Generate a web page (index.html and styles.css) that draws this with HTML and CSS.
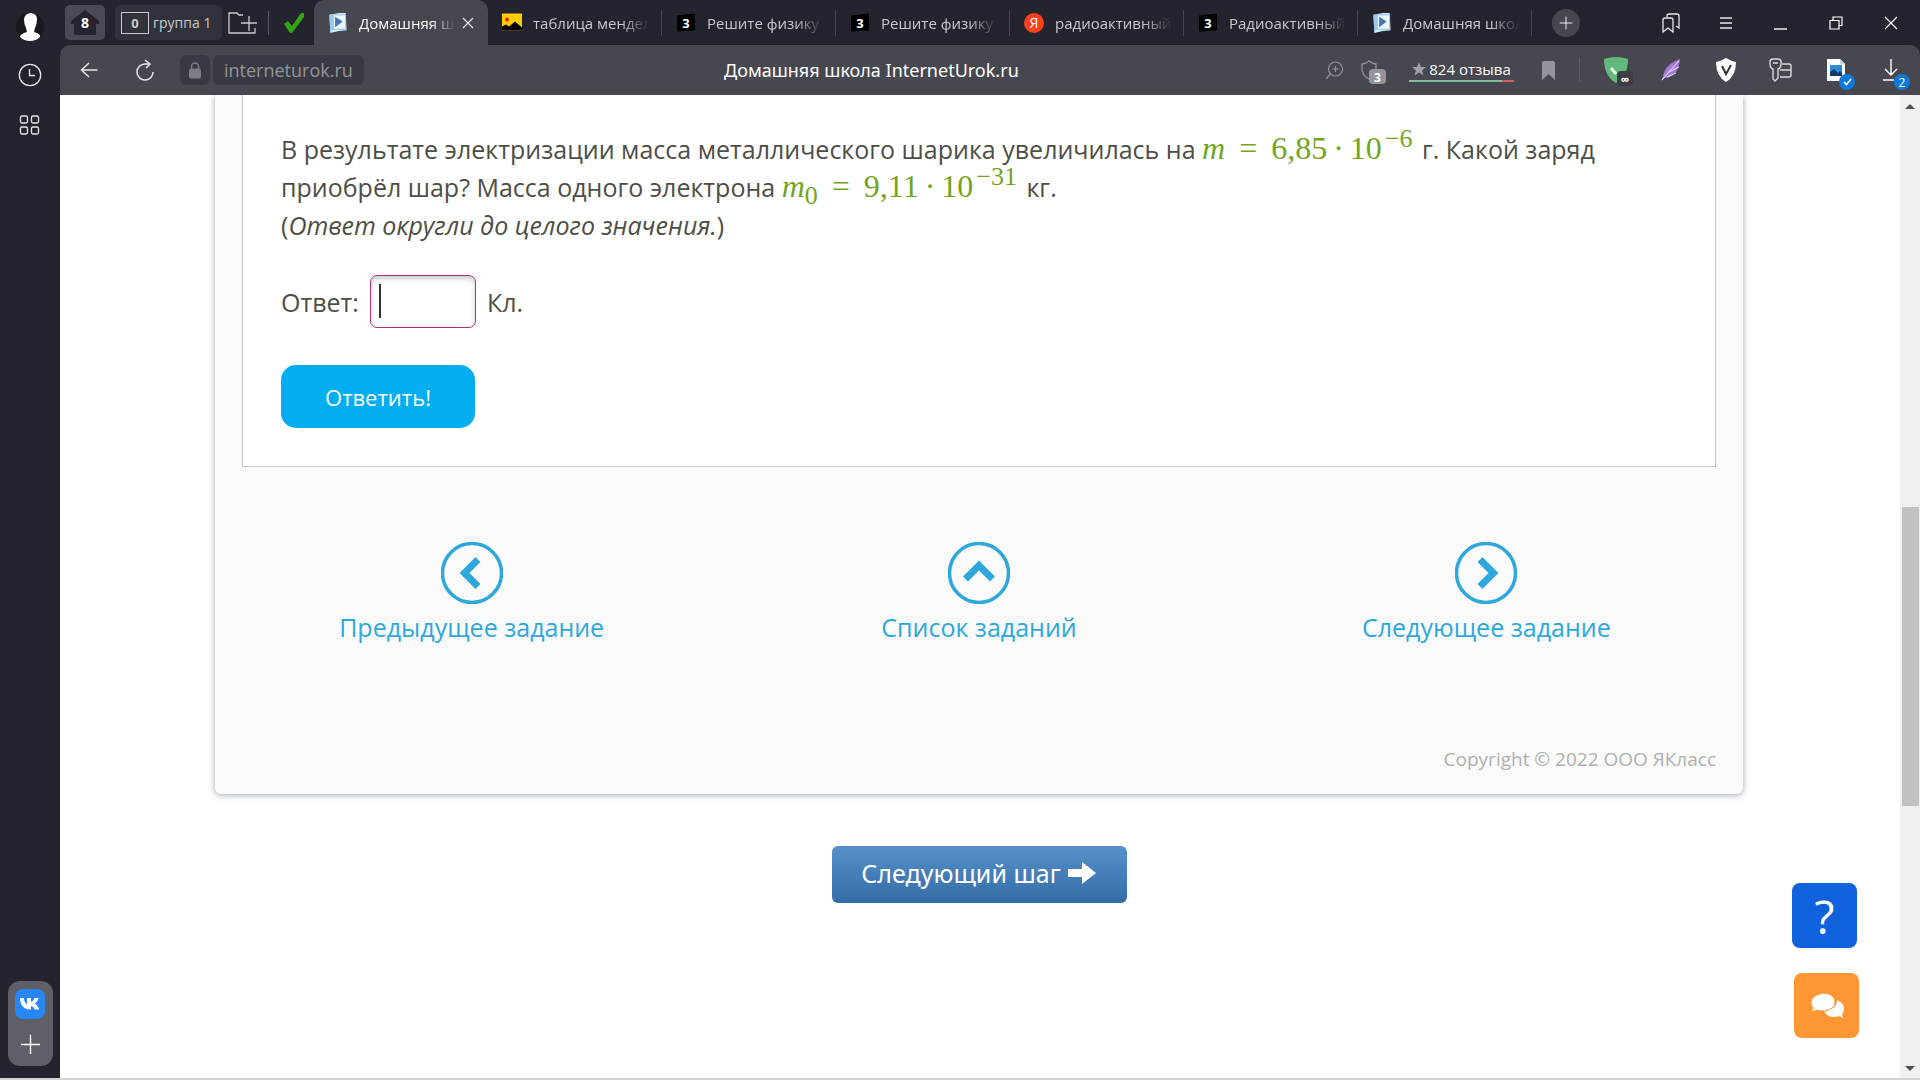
FILE: index.html
```html
<!DOCTYPE html>
<html lang="ru">
<head>
<meta charset="utf-8">
<title>Домашняя школа InternetUrok.ru</title>
<link rel="stylesheet" href="styles.css">
</head>
<body>
<svg width="0" height="0" class="sprite" aria-hidden="true">
  <symbol id="ico-video" viewBox="0 0 20 22">
    <path d="M1 3l10-2 7 0 1 18-8 1-9 2z" fill="#d5ebfa"/>
    <path d="M1 3h4v15l-3 3z" fill="#9cc8ee"/>
    <path d="M5 3h13v15H5z" fill="#eef8ff" stroke="#8fc0ea"/>
    <path d="M7 5l8 5-8 6z" fill="#3f78b5"/>
  </symbol>
  <symbol id="ico-znania" viewBox="0 0 20 20">
    <path d="M1 3l18-2v17l-18 1z" fill="#000"/>
  </symbol>
  <symbol id="ico-plus" viewBox="0 0 20 20">
    <path d="M10 1v18M1 10h18" fill="none" stroke="currentColor" stroke-width="1.3"/>
  </symbol>
</svg>

<div class="browser">
  <aside class="rail">
    <button class="rail-btn avatar" aria-label="Профиль">
      <svg width="30" height="32" viewBox="0 0 30 32"><circle cx="15" cy="16" r="14" fill="#17171c"/><path d="M9 8q1-6 7-6 6 1 6 6 0 5-2 9l-1 4q7 2 6 5-4 4-10 4T5 26q0-3 7-5l-1-4q-2-4-2-9z" fill="#fff"/></svg>
    </button>
    <button class="rail-btn clock" aria-label="История">
      <svg width="24" height="24" viewBox="0 0 24 24" fill="none" stroke="#e8e8ea" stroke-width="1.3"><circle cx="12" cy="12" r="10.7"/><path d="M11.500 6v6.500H17"/></svg>
    </button>
    <button class="rail-btn" aria-label="Табло">
      <svg width="22" height="22" viewBox="0 0 22 22" fill="none" stroke="#e8e8ea" stroke-width="1.3"><rect x="1.500" y="2" width="7" height="7" rx="1.500"/><rect x="12.500" y="2" width="7" height="7" rx="1.500"/><rect x="1.500" y="13" width="7" height="7" rx="1.500"/><rect x="12.500" y="13" width="7" height="7" rx="1.500"/></svg>
    </button>
    <div class="dock">
      <button class="vk" aria-label="ВКонтакте">
        <svg width="20" height="14" viewBox="0 0 20 14"><path d="M0 1h4c0 4 2 6 3 6.500V1h4v4c1-.2 3-2 3.500-4h4.200c-.6 2.500-2.700 4.700-4 5.500 1.300.7 3.800 3 4.500 6h-4.500c-.6-2-2-3.200-3.700-3.500v3.500h-1C4 12.500.2 8.500 0 1z" fill="#fff"/></svg>
      </button>
      <button class="dock-add" aria-label="Добавить"><svg width="21" height="21"><use href="#ico-plus"/></svg></button>
    </div>
  </aside>

  <header class="tabstrip">
    <button class="home" aria-label="Закладки">
      <svg width="30" height="26" viewBox="0 0 30 26"><path d="M15 0l14 11v3h-3v11H4V14H1v-3z" fill="#23242d"/></svg>
      <span class="home-count">8</span>
    </button>
    <button class="group">
      <span class="folder">0</span><span>группа 1</span>
    </button>
    <button class="folder-add" aria-label="Новая группа">
      <svg width="30" height="22" viewBox="0 0 30 22" fill="none" stroke="#c9cacf" stroke-width="1.3"><path d="M15 3h-4L9 1H1v20h26v-5"/><path d="M21 4v15M13 11h16"/></svg>
    </button>
    <span class="bar"></span>
    <button class="pinned" aria-label="Закреплённая вкладка">
      <svg width="22" height="22" viewBox="0 0 22 22"><path d="M1 12l4-3 4 5L18 1h3v4L9 21H7z" fill="#32a60e"/></svg>
    </button>
    <nav class="tabs">
      <a class="tab active" href="#"><svg class="fav"><use href="#ico-video"/></svg><span class="label">Домашняя школа</span><svg class="close" width="12" height="12" viewBox="0 0 12 12"><path d="M1 1l10 10M11 1L1 11" stroke="#e8e8ea" stroke-width="1.2"/></svg></a>
      <a class="tab" href="#"><svg class="fav" viewBox="0 0 20 20"><path d="M0 1h20v17H0z" fill="#fc0"/><path d="M0 18v-4l4-2 3 2 6-5 7 6v3z" fill="#000"/><circle cx="5" cy="7" r="2" fill="#e02020"/></svg><span class="label">таблица менделеева</span></a>
      <a class="tab" href="#"><span class="fav zn"><svg class="fav"><use href="#ico-znania"/></svg><b>3</b></span><span class="label">Решите физику</span></a>
      <a class="tab" href="#"><span class="fav zn"><svg class="fav"><use href="#ico-znania"/></svg><b>3</b></span><span class="label">Решите физику</span></a>
      <a class="tab" href="#"><span class="fav ya">Я</span><span class="label">радиоактивный</span></a>
      <a class="tab" href="#"><span class="fav zn"><svg class="fav"><use href="#ico-znania"/></svg><b>3</b></span><span class="label">Радиоактивный</span></a>
      <a class="tab" href="#"><svg class="fav"><use href="#ico-video"/></svg><span class="label">Домашняя школа</span></a>
    </nav>
    <button class="new-tab" aria-label="Новая вкладка"><svg width="14" height="14"><use href="#ico-plus"/></svg></button>
    <div class="cells">
      <button aria-label="Коллекции"><svg width="18" height="20" viewBox="0 0 18 20" fill="none" stroke="#e8e8ea" stroke-width="1.3"><path d="M5 4V3q0-2 2-2h8q2 0 2 2v12l-3-2"/><path d="M1 19V7q0-2 2-2h6q2 0 2 2v12l-5-4z"/></svg></button>
      <button aria-label="Меню"><svg width="14" height="14" viewBox="0 0 14 14"><path d="M1 2h12M1 7h12M1 12h12" stroke="#e8e8ea" stroke-width="1.3"/></svg></button>
      <button aria-label="Свернуть"><svg width="14" height="14" viewBox="0 0 14 14"><path d="M0 13h13" stroke="#fff" stroke-width="1.4"/></svg></button>
      <button aria-label="Окно"><svg width="14" height="14" viewBox="0 0 14 14" fill="none" stroke="#fff" stroke-width="1.2"><path d="M1 4.500h9V13H1zM4 4V1h9v8.500h-3"/></svg></button>
      <button aria-label="Закрыть"><svg width="14" height="14" viewBox="0 0 14 14"><path d="M1 1l12 12M13 1L1 13" stroke="#fff" stroke-width="1.2"/></svg></button>
    </div>
  </header>

  <div class="toolbar">
    <button class="back" aria-label="Назад"><svg width="18" height="16" viewBox="0 0 18 16" fill="none" stroke="#e8e8ea" stroke-width="1.4"><path d="M17.500 8H1.500M9 1L1.500 8 9 15"/></svg></button>
    <button class="reload" aria-label="Обновить"><svg width="20" height="22" viewBox="0 0 20 22" fill="none" stroke="#e8e8ea" stroke-width="1.5"><path d="M14.500 5H10a8 8 0 1 0 8 8"/><path d="M10 1l5 4-4 4"/></svg></button>
    <button class="lock" aria-label="Защита"><svg width="14" height="17" viewBox="0 0 14 17"><path d="M3.500 7V4.500a3.500 3.500 0 0 1 7 0V7" fill="none" stroke="#7d7e86" stroke-width="1.500"/><rect x="1" y="6.500" width="12" height="10" rx="2" fill="#7d7e86"/></svg></button>
    <a class="host" href="#">interneturok.ru</a>
    <h1 class="page-title">Домашняя школа InternetUrok.ru</h1>
    <button class="zoom" aria-label="Масштаб"><svg width="19" height="19" viewBox="0 0 19 19" fill="none" stroke="#94959c" stroke-width="1.2"><circle cx="10.500" cy="8" r="7"/><path d="M5.500 13L1 18M7.500 8h6M10.500 5v6"/></svg></button>
    <button class="protect" aria-label="Защита сайта"><svg width="18" height="20" viewBox="0 0 18 20" fill="none" stroke="#94959c" stroke-width="1.3"><path d="M9 1q3 2.500 7 3v6q-1 6-7 9-6-3-7-9V4q4-.5 7-3z"/></svg><span class="badge grey">3</span></button>
    <a class="rating" href="#"><span class="reviews"><svg width="14" height="14" viewBox="0 0 14 14"><path d="M7 0l2 5h5l-4 3.400 1.500 5.100L7 10.500l-4.500 3L4 8.400 0 5h5z" fill="#a0a1a8"/></svg>824 отзыва</span></a>
    <button class="mark" aria-label="Закладка"><svg width="13" height="19" viewBox="0 0 13 19"><path d="M0 2q0-2 2-2h9q2 0 2 2v17l-6.500-6L0 19z" fill="#94959c"/></svg></button>
    <span class="bar short"></span>
    <div class="cells">
      <button aria-label="Adguard"><svg width="26" height="26" viewBox="0 0 26 26"><path d="M1 2q12-4 24 0 0 17-12 24Q1 19 1 2z" fill="#62b97b"/><path d="M8 11l5 6" fill="none" stroke="#e9f5ec" stroke-width="3"/></svg><span class="badge dark">∞</span></button>
      <button aria-label="Перо"><svg width="22" height="24" viewBox="0 0 22 24"><path d="M20 1Q4 7 3 19l-2 4 4-3Q18 19 20 1z" fill="#a67ad8"/><path d="M2 22Q10 12 19 3M7 19l9-4M9 14l10-5" stroke="#efe0ff" fill="none"/></svg></button>
      <button aria-label="Щит"><svg width="22" height="24" viewBox="0 0 22 24"><path d="M11 0q5 3 10 4 0 14-10 20Q1 18 1 4 6 3 11 0z" fill="#fff"/><path d="M7 8l4 8 5-9" fill="none" stroke="#33343d" stroke-width="2"/></svg></button>
      <button aria-label="Пароли"><svg width="24" height="24" viewBox="0 0 24 24" fill="none" stroke="#d8d8dc" stroke-width="1.400"><path d="M12 6q0 4-3 5v9l-3 3-2-2V11q-3-1-3-5V4q0-3 3-3h5q3 0 3 3z"/><path d="M4 5h5M13 6h7q2 0 2 2v9q0 2-2 2h-9M11 12h11"/></svg></button>
      <button aria-label="Снимок"><svg width="20" height="24" viewBox="0 0 20 24"><path d="M1 1h13l5 5v17H1z" fill="#fff"/><path d="M14 1v5h5" fill="#c7d7e4"/><path d="M4 7h12v11H4z" fill="#2d8bd6"/><path d="M4 18v-4l4-3 4 4 2-2 2 2v3z" fill="#123a6b"/></svg><span class="badge blue"><svg width="9" height="8" viewBox="0 0 9 8"><path d="M1 4l2.500 2.500L8 1" fill="none" stroke="#fff" stroke-width="1.600"/></svg></span></button>
      <button aria-label="Загрузки"><svg width="18" height="22" viewBox="0 0 18 22" fill="none" stroke="#fff" stroke-width="1.400"><path d="M9 0v16M3 10l6 6 6-6M1 21h11"/></svg><span class="badge blue">2</span></button>
    </div>
  </div>

  <main class="viewport">
    <div class="page">
      <article class="card">
        <section class="task">
          <p class="text">В результате электризации масса металлического шарика увеличилась на
            <span class="math"><i>m</i><span class="rel">=</span>6,85<span class="dot">·</span>10<sup>−6</sup></span> г. Какой заряд приобрёл шар? Масса одного электрона
            <span class="math"><i>m</i><sub>0</sub><span class="rel">=</span>9,11<span class="dot">·</span>10<sup>−31</sup></span> кг.<br>(<em>Ответ округли до целого значения.</em>)</p>
          <div class="answer">
            <label for="answer">Ответ:</label>
            <span class="field"><input id="answer" type="text"><span class="caret"></span></span>
            <span>Кл.</span>
          </div>
          <button class="submit">Ответить!</button>
        </section>
        <nav class="steps">
          <a href="#"><svg width="62" height="62" viewBox="0 0 62 62"><circle cx="31" cy="31" r="29.500" fill="none" stroke="#2ea8db" stroke-width="3.500"/><path d="M37 17.500L23.500 31 37 44.500" fill="none" stroke="#2ea8db" stroke-width="7"/></svg>Предыдущее задание</a>
          <a href="#"><svg width="62" height="62" viewBox="0 0 62 62"><circle cx="31" cy="31" r="29.500" fill="none" stroke="#2ea8db" stroke-width="3.500"/><path d="M17.500 37L31 23.500 44.500 37" fill="none" stroke="#2ea8db" stroke-width="7"/></svg>Список заданий</a>
          <a href="#"><svg width="62" height="62" viewBox="0 0 62 62"><circle cx="31" cy="31" r="29.500" fill="none" stroke="#2ea8db" stroke-width="3.500"/><path d="M25 17.500L38.500 31 25 44.500" fill="none" stroke="#2ea8db" stroke-width="7"/></svg>Следующее задание</a>
        </nav>
        <footer class="copyright">Copyright © 2022 ООО ЯКласс</footer>
      </article>
      <button class="next">Следующий шаг<svg width="30" height="22" viewBox="0 0 30 22"><path d="M1 7h14V0l14 11-14 11v-7H1z" fill="#fff"/></svg></button>
      <div class="floating">
        <button class="help">?</button>
        <button class="chat" aria-label="Чат"><svg width="34" height="28" viewBox="0 0 34 28"><path d="M14 19q3 6 10 6 3 0 5-1l4 2-1-4q2-2 2-5 0-6-7-9 0 9-13 11z" fill="#fff"/><path d="M12.500 1C19 1 25 4 25 10s-6 9-12.500 9q-3 0-5-1L1 20l2-4q-2-2-2-6 0-6 11.500-9z" fill="#fff" stroke="#fe9634"/></svg></button>
      </div>
    </div>
    <div class="scroll" aria-hidden="true">
      <span class="arrow up"></span>
      <span class="track"><span class="thumb"></span></span>
      <span class="arrow down"></span>
    </div>
  </main>
</div>
</body>
</html>
```
FILE: styles.css
```css
* {
  box-sizing: border-box;
}

body {
  margin: 0;
  background: #fff;
  font-family: "Open Sans", "Noto Sans", sans-serif;
  color: #4d4e46;
}

button {
  padding: 0;
  border: 0;
  background: none;
  font: inherit;
  color: inherit;
}

a {
  color: inherit;
  text-decoration: none;
}

svg {
  display: block;
  flex: none;
}

.sprite {
  position: absolute;
}

.browser {
  display: grid;
  grid-template-columns: 60px 1fr;
  grid-template-rows: 45px 50px 1fr;
  min-height: 100vh;
  background: #23242d;
  border-bottom: 2px solid #d4d4d4;
}

/* left rail */

.rail {
  grid-row: 1 / 4;
  display: flex;
  flex-direction: column;
  align-items: center;
  padding: 11px 0 12px;
}

.rail-btn {
  display: grid;
  place-items: center;
  height: 50px;
}

.avatar {
  height: 32px;
  margin-bottom: 7px;
}

.dock {
  display: flex;
  flex-direction: column;
  align-items: center;
  justify-content: space-between;
  width: 45px;
  height: 85px;
  margin-top: auto;
  padding: 8px 0 11px;
  border-radius: 12px;
  background: #5f5f67;
}

.vk {
  display: grid;
  place-items: center;
  width: 30px;
  height: 30px;
  border-radius: 8px;
  background: #2787f5;
}

.dock-add {
  color: #fff;
}

/* tab strip */

.tabstrip {
  display: flex;
  align-items: center;
  padding: 0 2px 0 5px;
  color: #c9cacf;
  font-size: 15px;
}

.home,
.group {
  display: flex;
  align-items: center;
  height: 35px;
  border-radius: 5px;
}

.home {
  position: relative;
  justify-content: center;
  width: 40px;
  background: #4a4a54;
}

.home-count {
  position: absolute;
  font-size: 14px;
  font-weight: 700;
  color: #fff;
}

.group {
  gap: 4px;
  width: 107px;
  margin-left: 10px;
  padding-left: 6px;
  background: #31323c;
  font-size: 14px;
  white-space: nowrap;
}

.folder {
  display: grid;
  place-items: center;
  width: 28px;
  height: 22px;
  border: 1px solid #c9cacf;
  font-size: 13px;
  font-weight: 700;
}

.folder-add {
  margin-left: 6px;
}

.bar {
  width: 1px;
  height: 24px;
  margin: 0 14px 0 10px;
  background: #5a5b64;
}

.pinned {
  margin-right: 9px;
}

.tabs {
  display: flex;
  flex: 0 1 1218px;
  align-self: stretch;
  min-width: 0;
}

.tab {
  position: relative;
  display: flex;
  flex: 1;
  align-items: center;
  gap: 11px;
  min-width: 0;
  padding: 0 12px 0 14px;
}

.tab:not(.active)::after {
  content: "";
  position: absolute;
  right: 0;
  width: 1px;
  height: 26px;
  background: #44454e;
}

.active {
  border-radius: 10px 10px 0 0;
  background: #474750;
  color: #fff;
}

.fav {
  flex: none;
  width: 20px;
  height: 21px;
}

.zn,
.ya {
  position: relative;
  display: grid;
  place-items: center;
  color: #fff;
  font-size: 13px;
}

.zn b {
  position: absolute;
}

.ya {
  height: 20px;
  border-radius: 50%;
  background: #fc3f1d;
  font-size: 14px;
}

.label {
  flex: 1;
  overflow: hidden;
  white-space: nowrap;
  -webkit-mask-image: linear-gradient(to right, #000 75%, transparent);
  mask-image: linear-gradient(to right, #000 75%, transparent);
}

.close {
  margin-right: 2px;
}

.active .label {
  margin-right: -4px;
}

.new-tab {
  display: grid;
  place-items: center;
  width: 28px;
  height: 28px;
  margin-left: 20px;
  border-radius: 50%;
  background: #474750;
  color: #fff;
}

.cells {
  display: flex;
  margin-left: auto;
}

.cells button {
  position: relative;
  display: grid;
  place-items: center;
  width: 55px;
  height: 28px;
}

/* toolbar */

.toolbar {
  display: flex;
  align-items: center;
  padding: 0 2px 0 20px;
  border-radius: 10px 10px 0 0;
  background: #474750;
  color: #fff;
}

.reload {
  margin-left: 37px;
}

.lock {
  display: grid;
  place-items: center;
  width: 30px;
  height: 30px;
  margin: 0 3px 0 25px;
  border-radius: 6px;
  background: #383942;
}

.host {
  height: 30px;
  padding: 0 11px;
  border-radius: 6px;
  background: #383942;
  font-size: 18px;
  line-height: 30px;
  color: #94959c;
}

.page-title {
  flex: 1;
  margin: 0;
  padding-left: 54px;
  font-family: "Noto Sans", sans-serif;
  font-size: 18px;
  font-weight: 400;
  text-align: center;
}

.protect {
  position: relative;
  margin: 0 23px 0 16px;
  padding-right: 8px;
}

.badge {
  position: absolute;
  display: grid;
  place-items: center;
  height: 15px;
  font-size: 12px;
  font-weight: 700;
  color: #fff;
}

.grey {
  right: 0;
  bottom: -4px;
  width: 17px;
  border-radius: 4px;
  background: #94959c;
}

.dark {
  right: 10px;
  bottom: -2px;
  width: 16px;
  border-radius: 4px;
  background: #3c3d45;
}

.blue {
  right: 8px;
  bottom: -6px;
  width: 16px;
  height: 16px;
  border-radius: 50%;
  background: #0b7ad8;
  font-weight: 400;
}

.rating {
  width: 105px;
  border-bottom: 2px solid;
  border-image: linear-gradient(to right, #7fbf9c 88%, #d35f5f 88%) 1;
}

.reviews {
  display: flex;
  align-items: center;
  justify-content: center;
  gap: 3px;
  font-size: 15px;
  line-height: 22px;
  white-space: nowrap;
}

.mark {
  margin: 0 24px 0 28px;
}

.short {
  margin: 0 8px 0 0;
}

/* page */

.viewport {
  display: flex;
  background: #fff;
}

.page {
  position: relative;
  flex: 1;
  display: flex;
  flex-direction: column;
  align-items: center;
  padding: 0 26px 0 24px;
}

.card {
  width: 100%;
  max-width: 1528px;
  height: 699px;
  display: flex;
  flex-direction: column;
  border-radius: 0 0 6px 6px;
  background: #fafafa;
  box-shadow: 0 1px 6px rgba(60, 80, 110, 0.5);
  clip-path: inset(0 -12px -12px -12px);
}

.task {
  margin: 0 27px;
  padding: 35px 38px 38px;
  border: 1px solid #c9c9c9;
  border-top: 0;
  background: #fff;
  font-size: 25px;
}

.text {
  margin: 0;
  line-height: 38px;
}

.math {
  font-family: "Liberation Serif", serif;
  font-size: 32px;
  line-height: 30px;
  color: #72a51d;
  white-space: nowrap;
}

.math sup,
.math sub {
  font-size: 26px;
  line-height: 0;
}

.math sup {
  margin: 0 3px;
}

.rel {
  margin: 0 14px;
}

.dot {
  margin: 0 6px;
}

.answer {
  display: flex;
  align-items: center;
  gap: 11px;
  margin: 31px 0 37px;
}

.field {
  position: relative;
}

.field input {
  display: block;
  width: 106px;
  height: 53px;
  padding: 0 10px;
  border: 1px solid #b5307c;
  border-radius: 7px;
  background: #fff;
  box-shadow: inset 0 3px 5px rgba(0, 0, 0, 0.2);
  font: inherit;
}

.caret {
  position: absolute;
  left: 9px;
  top: 9px;
  width: 2px;
  height: 34px;
  background: #333;
}

.submit {
  display: block;
  width: 194px;
  height: 63px;
  border-radius: 15px;
  background: #02aeef;
  font-size: 22px;
  color: #fff;
}

.steps {
  display: grid;
  grid-template-columns: repeat(3, 1fr);
  margin: 75px 3px 0;
  font-size: 25px;
  line-height: 34px;
  color: #2ea8db;
}

.steps a {
  display: flex;
  flex-direction: column;
  align-items: center;
  gap: 6px;
}

.copyright {
  margin: auto 27px 20px;
  font-size: 19px;
  line-height: 30px;
  text-align: right;
  color: #b0b0b0;
}

.next {
  display: flex;
  align-items: center;
  justify-content: center;
  gap: 6px;
  width: 295px;
  height: 57px;
  margin-top: 52px;
  padding-bottom: 3px;
  border-radius: 6px;
  background: linear-gradient(#5591cb, #356ca5);
  font-family: "Noto Sans", sans-serif;
  font-size: 25px;
  color: #fff;
}

.floating {
  position: absolute;
  right: 41px;
  bottom: 40px;
  display: flex;
  flex-direction: column;
  align-items: flex-end;
  gap: 25px;
}

.help,
.chat {
  display: grid;
  place-items: center;
  width: 65px;
  height: 65px;
  border-radius: 8px;
  color: #fff;
}

.help {
  margin-right: 2px;
  background: #1062dc;
  font-size: 46px;
  font-weight: 500;
  line-height: 60px;
}

.chat {
  background: #fe9634;
}

/* scroll bar */

.scroll {
  display: flex;
  flex-direction: column;
  align-items: center;
  width: 20px;
  padding: 9px 0 7px;
  background: #f0f0f0;
}

.arrow {
  border: 5px solid transparent;
}

.up {
  border-top: 0;
  border-bottom-color: #505050;
}

.down {
  border-bottom: 0;
  border-top-color: #505050;
}

.track {
  display: flex;
  flex-direction: column;
  flex: 1;
  width: 17px;
}

.track::before {
  content: "";
  flex: 398;
}

.track::after {
  content: "";
  flex: 260;
}

.thumb {
  flex: 299;
  background: #c1c1c1;
}
```
